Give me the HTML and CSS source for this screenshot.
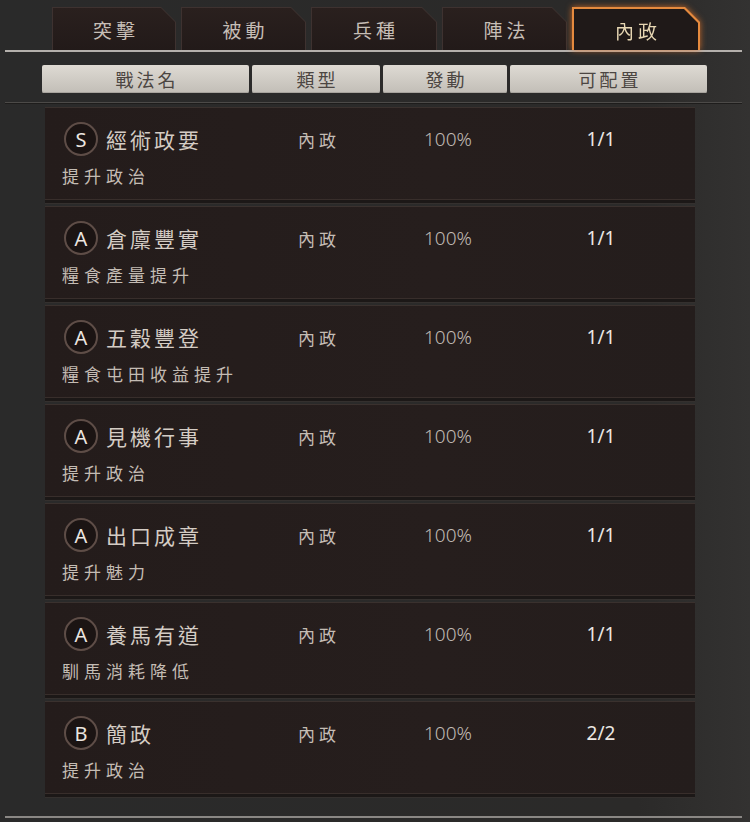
FILE: index.html
```html
<!DOCTYPE html>
<html lang="zh-Hant">
<head>
<meta charset="UTF-8">
<meta name="viewport" content="width=device-width, initial-scale=1.0">
<title>戰法</title>
<link rel="stylesheet" href="styles.css">
</head>
<body>

<div class="tabs">
  <div class="tab"><div class="tab-face"><div class="tab-inner">突擊</div></div></div>
  <div class="tab"><div class="tab-face"><div class="tab-inner">被動</div></div></div>
  <div class="tab"><div class="tab-face"><div class="tab-inner">兵種</div></div></div>
  <div class="tab"><div class="tab-face"><div class="tab-inner">陣法</div></div></div>
  <div class="tab active"><div class="tab-face"><div class="tab-inner">內政</div></div></div>
</div>
<div class="rule"></div>

<div class="head">
  <div class="head-cell c-name">戰法名</div>
  <div class="head-cell c-type">類型</div>
  <div class="head-cell c-act">發動</div>
  <div class="head-cell c-cfg">可配置</div>
</div>
<div class="rule dim"></div>

<div class="list">
  <div class="row">
    <div class="title"><span class="rank">S</span><span class="name">經術政要</span></div>
    <div class="type">內政</div>
    <div class="act">100%</div>
    <div class="cfg">1/1</div>
    <div class="desc">提升政治</div>
  </div>
  <div class="row">
    <div class="title"><span class="rank">A</span><span class="name">倉廩豐實</span></div>
    <div class="type">內政</div>
    <div class="act">100%</div>
    <div class="cfg">1/1</div>
    <div class="desc">糧食產量提升</div>
  </div>
  <div class="row">
    <div class="title"><span class="rank">A</span><span class="name">五穀豐登</span></div>
    <div class="type">內政</div>
    <div class="act">100%</div>
    <div class="cfg">1/1</div>
    <div class="desc">糧食屯田收益提升</div>
  </div>
  <div class="row">
    <div class="title"><span class="rank">A</span><span class="name">見機行事</span></div>
    <div class="type">內政</div>
    <div class="act">100%</div>
    <div class="cfg">1/1</div>
    <div class="desc">提升政治</div>
  </div>
  <div class="row">
    <div class="title"><span class="rank">A</span><span class="name">出口成章</span></div>
    <div class="type">內政</div>
    <div class="act">100%</div>
    <div class="cfg">1/1</div>
    <div class="desc">提升魅力</div>
  </div>
  <div class="row">
    <div class="title"><span class="rank">A</span><span class="name">養馬有道</span></div>
    <div class="type">內政</div>
    <div class="act">100%</div>
    <div class="cfg">1/1</div>
    <div class="desc">馴馬消耗降低</div>
  </div>
  <div class="row">
    <div class="title"><span class="rank">B</span><span class="name">簡政</span></div>
    <div class="type">內政</div>
    <div class="act">100%</div>
    <div class="cfg">2/2</div>
    <div class="desc">提升政治</div>
  </div>
</div>
<div class="rule bottom"></div>

</body>
</html>
```

FILE: styles.css
```css
body {
  margin: 0;
  height: 822px;
  overflow: hidden;
  font-family: "Noto Sans CJK TC", "Noto Sans", sans-serif;
  background: linear-gradient(90deg, #2a2a2a 0%, #2b2a29 85%, #333231 100%);
  color: #d0c8c0;
}

/* tabs */
.tabs {
  display: flex;
  gap: 5px;
  padding: 7px 0 0 52px;
  height: 43px;
}
.tab { width: 125px; height: 43px; }
.tab:nth-child(1) { width: 124px; }
.tab:nth-child(3) { width: 126px; }
.tab.active {
  width: 128px;
  filter: drop-shadow(0 0 3px rgba(235, 120, 40, 0.8));
}
.tab-face {
  height: 100%;
  padding: 1px 1px 0 1px;
  box-sizing: border-box;
  background: #3e3230;
  clip-path: polygon(0 0, calc(100% - 15px) 0, 100% 15px, 100% 100%, 0 100%);
}
.tab-inner {
  height: 100%;
  display: flex;
  align-items: center;
  justify-content: center;
  padding-top: 1px;
  box-sizing: border-box;
  background: linear-gradient(#2a201e, #221a19);
  clip-path: polygon(0 0, calc(100% - 14px) 0, 100% 14px, 100% 100%, 0 100%);
  font-size: 19px;
  letter-spacing: 4px;
  text-indent: 4px;
  color: #c6beb6;
}
.tab.active .tab-face {
  padding: 2px 2px 0 2px;
  background: #e58a3e;
}
.tab.active .tab-inner {
  background: #1f1918;
  color: #e6d6b2;
}

.rule {
  height: 2px;
  margin: 0 8px 0 5px;
  background: #b4b0ac;
}
.rule.dim {
  height: 1px;
  margin-top: 9px;
  background: #4c4a48;
  box-shadow: 0 1px 0 #1e1d1c;
}
.rule.bottom {
  margin-top: 22px;
  height: 2px;
  background: #8a8784;
}

/* header */
.head {
  display: flex;
  gap: 3px;
  margin: 13px 0 0 42px;
  height: 28px;
}
.head-cell {
  display: flex;
  align-items: center;
  justify-content: center;
  border-radius: 2px;
  background: linear-gradient(#dedad3, #c2beb7);
  box-shadow: inset 0 -1px 0 #a8a49e;
  color: #4c4642;
  font-size: 18px;
  letter-spacing: 3px;
  text-indent: 3px;
}
.head-cell.c-name { width: 207px; }
.head-cell.c-type { width: 128px; }
.head-cell.c-act { width: 124px; }
.head-cell.c-cfg { width: 197px; }

/* rows */
.list {
  margin: 4px 0 0 45px;
  width: 650px;
}
.row {
  display: grid;
  grid-template-columns: 208px 128px 134px 172px;
  grid-template-rows: 36px 1fr;
  align-items: center;
  height: 93px;
  padding-top: 13px;
  box-sizing: border-box;
  margin-bottom: 6px;
  background: linear-gradient(90deg, #241c1b 0%, #261e1d 60%, #241d1c 100%);
  border-top: 1px solid #3a312e;
  border-bottom: 1px solid #382e2b;
  box-shadow: 0 3px 0 #1c1817, 0 4px 0 #34302e;
}
.title {
  display: flex;
  align-items: center;
  padding-left: 19px;
}
.rank {
  width: 30px;
  height: 30px;
  border-radius: 50%;
  border: 2px solid #5e4d47;
  background: #1b1413;
  display: flex;
  align-items: center;
  justify-content: center;
  font-family: "Noto Sans", sans-serif;
  font-size: 20px;
  color: #ece6e0;
  margin-right: 8px;
}
.name {
  font-size: 21px;
  letter-spacing: 3px;
  color: #d4ccc4;
}
.type {
  text-align: center;
  font-size: 17px;
  letter-spacing: 4px;
  text-indent: 4px;
  color: #c4bcb4;
}
.act {
  text-align: center;
  font-family: "Noto Sans", sans-serif;
  font-size: 19px;
  font-weight: 300;
  color: #c0bab4;
}
.cfg {
  text-align: center;
  font-family: "Noto Sans", sans-serif;
  font-size: 19px;
  color: #ebe7e3;
}
.desc {
  grid-column: 1 / -1;
  align-self: start;
  padding: 6px 0 0 17px;
  font-size: 17px;
  letter-spacing: 5px;
  color: #c4bcb4;
}
```
